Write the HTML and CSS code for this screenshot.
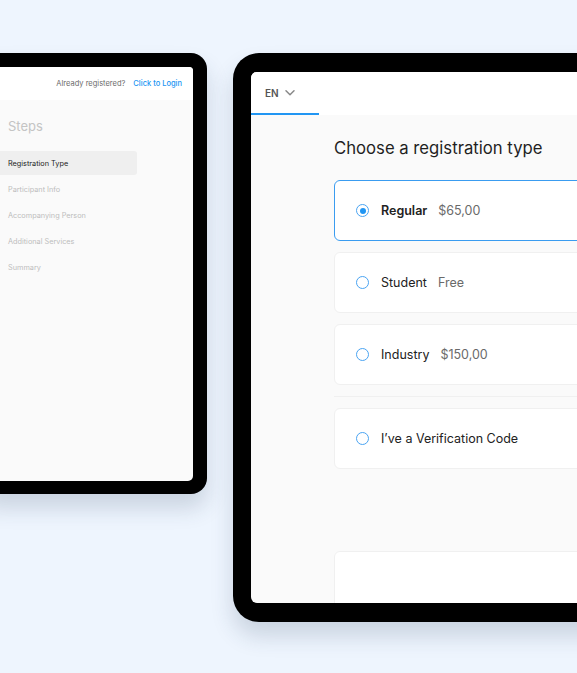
FILE: index.html
```html
<!DOCTYPE html>
<html>
    <head>
        <title>Registration</title>
        <link rel="stylesheet" href="styles.css">
    </head>
    <body>
        <div class="desk">
            <div class="tablet tablet-back">
                <div class="screen">
                    <div class="top-bar">
                        <span class="muted">Already registered?</span>
                        <a class="login" href="#">Click to Login</a>
                    </div>
                    <div class="steps">
                        <div class="steps-title">Steps</div>
                        <div class="step active">Registration Type</div>
                        <div class="step">Participant Info</div>
                        <div class="step">Accompanying Person</div>
                        <div class="step">Additional Services</div>
                        <div class="step">Summary</div>
                    </div>
                </div>
            </div>

            <div class="tablet tablet-front">
                <div class="screen">
                    <div class="header">
                        <div class="lang">
                            EN
                            <svg width="10" height="7" viewBox="0 0 10 7"><path d="M1 1.8l4 4 4-4" fill="none" stroke="#8a8a8a" stroke-width="1.5" stroke-linecap="round" stroke-linejoin="round"/></svg>
                        </div>
                    </div>
                    <div class="content">
                        <h1>Choose a registration type</h1>
                        <div class="options">
                            <label class="option selected">
                                <span class="radio"></span>
                                <span class="name">Regular</span>
                                <span class="price">$65,00</span>
                            </label>
                            <label class="option">
                                <span class="radio"></span>
                                <span class="name">Student</span>
                                <span class="price">Free</span>
                            </label>
                            <label class="option">
                                <span class="radio"></span>
                                <span class="name">Industry</span>
                                <span class="price">$150,00</span>
                            </label>
                            <div class="divider"></div>
                            <label class="option">
                                <span class="radio"></span>
                                <span class="name">I’ve a Verification Code</span>
                            </label>
                        </div>
                        <div class="panel"></div>
                    </div>
                </div>
            </div>
        </div>
    </body>
</html>
```

FILE: styles.css
```css
body {
    margin: 0;
    background: #eef5fe;
    font-family: Inter, "Noto Sans", sans-serif;
    color: #1f1f1f;
}
.desk {
    position: relative;
    width: 577px;
    height: 673px;
    overflow: hidden;
}

/* device frames */
.tablet {
    position: absolute;
    background: #000;
    box-sizing: border-box;
    box-shadow: 0 14px 22px rgba(40, 60, 90, 0.18);
}
.tablet .screen {
    width: 100%;
    height: 100%;
    background: #fafafa;
    overflow: hidden;
}
.tablet-back {
    left: -20px;
    top: 53px;
    width: 227px;
    height: 441px;
    padding: 14px 14px 13px 20px;
    border-radius: 16px;
}
.tablet-back .screen {
    border-radius: 0 4px 5px 0;
}
.tablet-front {
    left: 233px;
    top: 53px;
    width: 400px;
    height: 569px;
    padding: 19px 18px 19px 18px;
    border-radius: 26px;
}
.tablet-front .screen {
    border-radius: 6px 0 0 6px;
}

/* back tablet */
.top-bar {
    height: 33px;
    background: #fff;
    display: flex;
    align-items: center;
    justify-content: flex-end;
    gap: 8px;
    padding-right: 11px;
    font-size: 7.5px;
}
.muted {
    color: #6b6b6b;
}
.login {
    color: #2196f3;
    text-decoration: none;
    font-weight: 500;
}
.steps {
    padding-top: 18px;
}
.steps-title {
    font-size: 13px;
    color: #c4c4c4;
    padding-left: 8px;
    margin-bottom: 17px;
}
.step {
    width: 137px;
    height: 24px;
    box-sizing: border-box;
    padding-left: 8px;
    display: flex;
    align-items: center;
    font-size: 7.3px;
    color: #bdbdbd;
    margin-bottom: 2px;
}
.step.active {
    background: #efefef;
    color: #222;
    border-radius: 0 3px 3px 0;
}

/* front tablet */
.header {
    height: 43px;
    background: #fff;
    display: flex;
}
.lang {
    width: 68px;
    box-sizing: border-box;
    padding-left: 14px;
    display: flex;
    align-items: center;
    gap: 6px;
    font-size: 10px;
    font-weight: 600;
    color: #555;
    border-bottom: 2px solid #2196f3;
}
.content {
    padding: 23px 0 0 83px;
}
h1 {
    margin: 0 0 22px;
    font-size: 16.7px;
    font-weight: 400;
    color: #1f1f1f;
}
.options {
    display: flex;
    flex-direction: column;
    gap: 11px;
}
.option {
    height: 61px;
    box-sizing: border-box;
    background: #fff;
    border: 1px solid #f0f0f0;
    border-radius: 6px;
    display: flex;
    align-items: center;
    padding-left: 21px;
    font-size: 12.5px;
}
.option.selected {
    border-color: #3a9cf0;
}
.radio {
    width: 13px;
    height: 13px;
    box-sizing: border-box;
    border: 1.5px solid #4aa4f2;
    border-radius: 50%;
    margin-right: 12px;
    display: flex;
    align-items: center;
    justify-content: center;
}
.selected .radio::after {
    content: "";
    width: 6px;
    height: 6px;
    border-radius: 50%;
    background: #2196f3;
}
.name {
    color: #222;
    margin-right: 11px;
}
.selected .name {
    font-weight: 600;
}
.price {
    color: #6a6a6a;
}
.divider {
    height: 1px;
    background: #f0f0f0;
}
.panel {
    margin-top: 82px;
    height: 60px;
    background: #fff;
    border: 1px solid #f0f0f0;
    border-radius: 6px 0 0 0;
}
```
